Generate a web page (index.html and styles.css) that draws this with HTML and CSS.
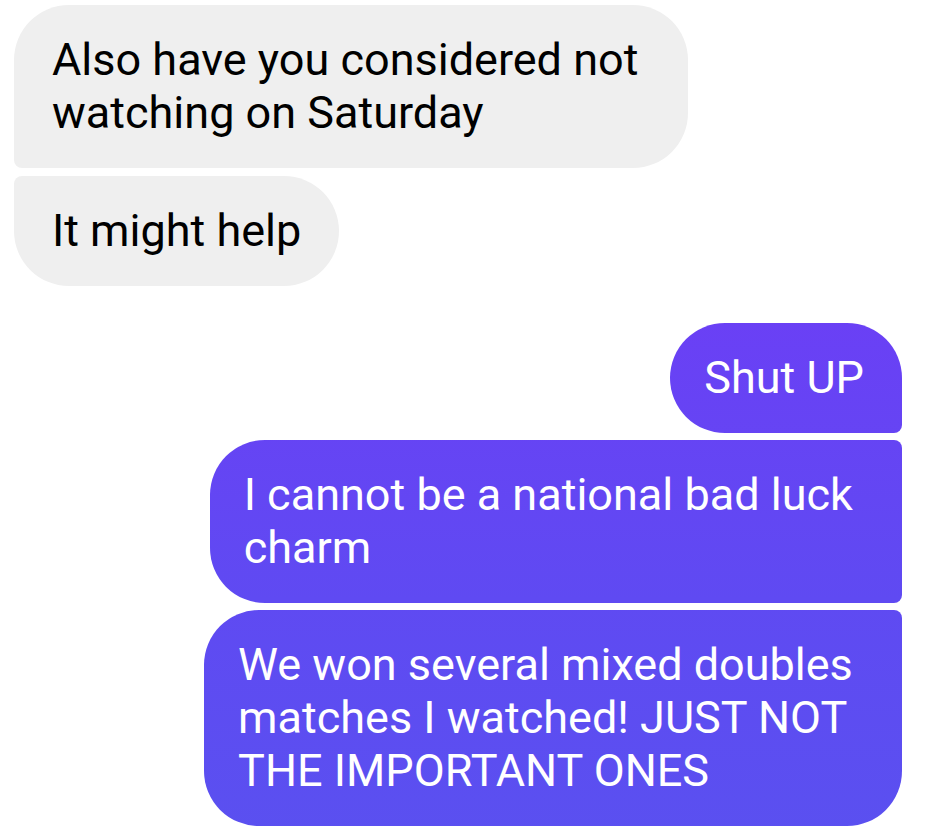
FILE: index.html
```html
<!DOCTYPE html>
<html lang="en">
<head>
<meta charset="UTF-8">
<meta name="viewport" content="width=device-width, initial-scale=1.0">
<title>Chat</title>
<link rel="stylesheet" href="styles.css">
</head>
<body>
<div class="thread">
    <div class="group incoming">
        <div class="bubble first">Also have you considered not&nbsp;<br>watching on Saturday</div>
        <div class="bubble last">It might help</div>
    </div>
    <div class="group outgoing">
        <div class="bubble first">Shut UP</div>
        <div class="bubble middle">I cannot be a national bad luck&nbsp;<br>charm</div>
        <div class="bubble last">We won several mixed doubles&nbsp;<br>matches I watched! JUST NOT&nbsp;<br>THE IMPORTANT ONES</div>
    </div>
</div>
</body>
</html>
```

FILE: styles.css
```css
body {
    margin: 0;
    padding: 0;
    background-color: #fff;
    font-family: Roboto, "Liberation Sans", sans-serif;
}
.thread {
    padding: 5px 23px 0 14px;
    display: flex;
    flex-direction: column;
    gap: 37px;
}
.group {
    display: flex;
    flex-direction: column;
    gap: 8px;
}
.incoming {
    align-items: flex-start;
}
.outgoing {
    align-items: flex-end;
    gap: 7px;
}
.bubble {
    font-size: 45px;
    line-height: 53px;
    padding: 28px 38px 29px;
    border-radius: 55px;
    white-space: nowrap;
}
.incoming .bubble {
    background-color: #efefef;
    color: #000;
}
.incoming .first {
    border-bottom-left-radius: 8px;
}
.incoming .last {
    border-top-left-radius: 8px;
}
.outgoing .bubble {
    padding-left: 34px;
    color: #fff;
    background-image: linear-gradient(180deg, #7038f6 0, #6a40f5 320px, #5f4af2 600px, #5a50f0 840px);
    background-attachment: fixed;
}
.outgoing .first {
    border-bottom-right-radius: 8px;
}
.outgoing .middle {
    border-top-right-radius: 8px;
    border-bottom-right-radius: 8px;
}
.outgoing .last {
    border-top-right-radius: 8px;
}
```
